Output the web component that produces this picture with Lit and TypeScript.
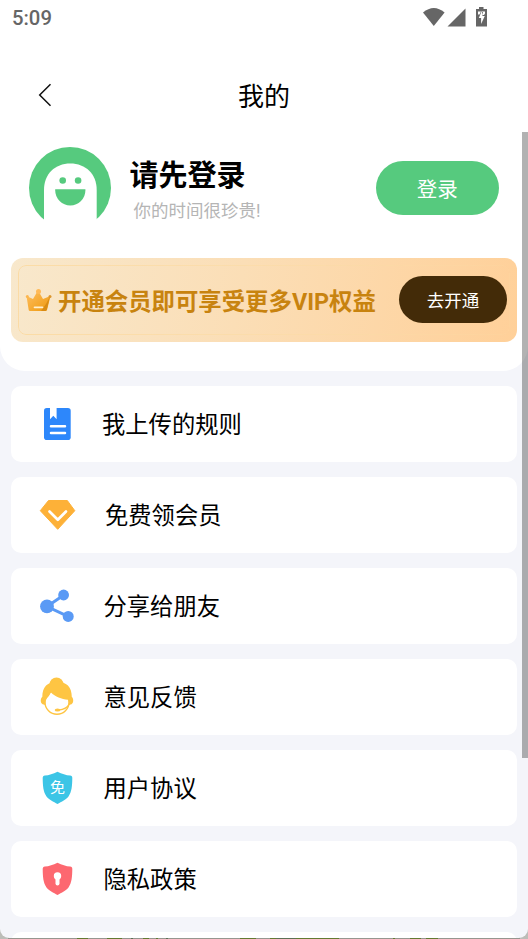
import { LitElement, html, svg, css, type SVGTemplateResult } from "lit";
import { customElement } from "lit/decorators.js";

interface MenuItem {
  label: string;
  icon: SVGTemplateResult;
  offset: number;
}

const ruleIcon = svg`
  <rect fill="#2d87fb" x="10" y="7" width="26.700" height="32" rx="2.800"/>
  <path fill="#fff" d="M16 6h6.600v12.300l-3.300-3.600-3.300 3.600z"/>
  <path stroke="#fff" stroke-width="2.500" stroke-linecap="round" d="M17 25.300h14M17 32.100h14"/>`;

const gemIcon = svg`
  <path fill="#fdb138" stroke="#fdb138" stroke-width="1" stroke-linejoin="round" d="M14.500 8.500h18.800l7.500 10.200L23.700 37.300 6.300 18.700z"/>
  <path fill="none" stroke="#fff" stroke-width="2.700" stroke-linecap="round" stroke-linejoin="round" d="M15.500 19.500l8.300 8.300 8.200-8.300"/>`;

const shareIcon = svg`
  <path stroke="#5a9af5" stroke-width="3" fill="none" d="M29.500 12.200L13 23.600l21 9.800"/>
  <circle fill="#5a9af5" cx="13" cy="23.400" r="6.900"/>
  <circle fill="#5a9af5" cx="29.600" cy="12" r="5.400"/>
  <circle fill="#5a9af5" cx="34.200" cy="33.400" r="5.500"/>`;

const supportIcon = svg`
  <circle fill="#fec543" cx="22.500" cy="10.500" r="7"/>
  <circle fill="#fff" stroke="#fec543" stroke-width="1.400" cx="23" cy="28.300" r="12"/>
  <path fill="#fec543" d="M8.300 23C8.300 13 13.500 7.800 23 7.800S37.800 13 37.800 23c1.900 1.200 2 6-.300 7.200L34.800 31c.2-2 .1-4-.8-5.300-6.500-.7-12.800-2.700-17.200-7.500-.7 3.500-3.800 5.300-5 8-.6 1.300-.6 3-.4 4.800l-2.800-.8C6.200 29 6.300 24.200 8.300 23z"/>
  <path fill="none" stroke="#fec543" stroke-width="1.400" d="M35.500 29.500c-2 4.300-5.500 6.200-11 6.600"/>
  <ellipse fill="#fec543" cx="23.500" cy="36.100" rx="2.800" ry="1.500"/>`;

const shieldPath =
  "M23.500 6.700c4.500 2.200 8.500 3.400 12.600 3.900 1.500.200 2.300 1.100 2.200 2.500-.1 8-.5 13.500-3.800 18.500-1.800 2.800-7.300 5.500-11 7.400-3.700-1.900-9.200-4.600-11-7.400C9.200 26.600 8.800 21.100 8.700 13.100c0-1.400.7-2.300 2.200-2.500 4.100-.5 8.100-1.700 12.600-3.900z";

const agreementIcon = svg`
  <path fill="#3cc5e6" d=${shieldPath}/>
  <text class="glyph" x="23.500" y="28.400" text-anchor="middle">免</text>`;

const privacyIcon = svg`
  <path fill="#fd6870" d=${shieldPath}/>
  <circle fill="#fff" cx="23.500" cy="20" r="3.700"/>
  <path stroke="#fff" stroke-width="4" stroke-linecap="round" d="M23.500 21v6.500"/>`;

const items: MenuItem[] = [
  { label: "我上传的规则", icon: ruleIcon, offset: -2 },
  { label: "免费领会员", icon: gemIcon, offset: 1 },
  { label: "分享给朋友", icon: shareIcon, offset: -0.5 },
  { label: "意见反馈", icon: supportIcon, offset: -0.5 },
  { label: "用户协议", icon: agreementIcon, offset: -0.5 },
  { label: "隐私政策", icon: privacyIcon, offset: -0.5 },
];

@customElement("app-root")
export class AppRoot extends LitElement {
  static styles = css`
    :host {
      display: block;
      position: relative;
      height: 939px;
      overflow: hidden;
      background: linear-gradient(90deg, #bcbdb8 0 8px, #96968f 8px 520px, #bcbdb8 520px);
      font-family: Roboto, "Noto Sans CJK SC", sans-serif;
      color: #000;
    }
    * { box-sizing: border-box; }
    svg { display: block; flex: none; }
    .desktop {
      position: absolute;
      left: 0;
      right: 0;
      bottom: 0;
      height: 1px;
      background: linear-gradient(90deg, transparent 77px, #637b32 77px 88px, transparent 88px 107px, #637b32 107px 122px, transparent 122px 131px, #5d7055 131px 133px, transparent 133px 143px, #637b32 143px 149px, transparent 149px 156px, #637b32 156px 158px, transparent 158px 166px, #5d7055 166px 168px, transparent 168px 240px, #637b32 240px 256px, transparent 256px 270px, #637b32 270px 276px, #5d7055 276px 296px, #637b32 296px 339px, transparent 339px 393px, #637b32 393px 395px, transparent 395px 410px, #637b32 410px 421px, transparent 421px 426px, #637b32 426px 438px, transparent 438px);
    }
    .screen {
      position: relative;
      height: 938px;
      overflow: hidden;
      border-radius: 0 0 9px 9px;
      background: #f4f5fa;
    }
    .top {
      height: 371px;
      background: #fff;
      border-radius: 0 0 25px 25px;
    }
    .status {
      display: flex;
      justify-content: space-between;
      height: 36px;
      padding: 0 40px 0 12px;
      color: #666;
      font-size: 20.3px;
      font-weight: 500;
      line-height: 37px;
    }
    .nav {
      display: grid;
      grid-template-columns: 60px 1fr 60px;
      align-items: center;
      height: 120px;
    }
    .nav svg { margin: -2px 0 0 37px; }
    .title {
      text-align: center;
      font-size: 26px;
      font-weight: 400;
      line-height: 40px;
      margin: 0;
      padding-top: 2px;
    }
    .profile {
      display: flex;
      align-items: center;
      height: 82px;
      margin-top: -9px;
      padding: 0 29px;
    }
    .who { flex: 1; padding: 8px 0 0 18.5px; }
    .name {
      font-size: 29px;
      line-height: 38px;
      font-weight: 700;
      margin: 0;
    }
    .hint {
      margin: 0 0 0 4px;
      font-size: 17.5px;
      line-height: 32px;
      color: #b5b5b5;
      white-space: nowrap;
    }
    button {
      border: 0;
      padding: 0;
      font-family: inherit;
      color: #fff;
    }
    .login {
      width: 123.5px;
      height: 54px;
      border-radius: 28px;
      background: #56ca7e;
      font-size: 20.5px;
    }
    .vip {
      display: flex;
      align-items: center;
      position: relative;
      height: 84px;
      margin: 29px 11px 0;
      padding: 0 10px 0 14px;
      border-radius: 12px;
      background: linear-gradient(100deg, #f8e8cc, #fbdeb6 45%, #ffd099);
    }
    .vip::before {
      content: "";
      position: absolute;
      inset: 7px;
      border: 1px solid #fbdba5;
      border-radius: 8px;
      -webkit-mask-image: linear-gradient(90deg, #000, rgba(0, 0, 0, 0.2));
    }
    .offer {
      flex: 1;
      padding-left: 6px;
      font-size: 23.4px;
      font-weight: 700;
      color: #c8830f;
      white-space: nowrap;
    }
    .open {
      position: relative;
      width: 108px;
      height: 47px;
      margin: -2px 0 0;
      border-radius: 24px;
      background: #432b08;
      font-size: 17.5px;
    }
    .menu {
      display: flex;
      flex-direction: column;
      gap: 15px;
      padding: 15px 11px 0;
    }
    .card {
      display: flex;
      flex: none;
      align-items: center;
      height: 76px;
      padding-left: 23px;
      border-radius: 10px;
      background: #fff;
    }
    .label {
      padding-top: 2px;
      font-size: 23.3px;
      line-height: 36px;
      white-space: nowrap;
    }
    .glyph { font-size: 15px; fill: #fff; }
    .scrollbar {
      position: absolute;
      top: 132px;
      right: 0;
      width: 6px;
      height: 626px;
      background: rgba(0, 0, 0, 0.3);
    }
  `;

  render() {
    return html`
      <div class="desktop"></div>
      <main class="screen">
        <section class="top">
          <div class="status">
            <span>5:09</span>
            <svg width="66" height="36" viewBox="422 0 66 36" fill="#666">
              <path d="M423 12.500Q433.800 3.500 444.600 12.500L433.800 26z" />
              <path d="M465.500 8.500V26.500H447.500z" />
              <path d="M479 7h4.500v2h3.500v17.500h-11V9h3z" />
              <path fill="#fff" d="M478 11.500h3l-1.500 3H478zM482 11.500h3v2l-1 1.500h-1.500zM481.800 11l-3 7h2.300v6l3.700-8h-2.400l.8-5z" />
            </svg>
          </div>
          <header class="nav">
            <svg width="16" height="24" viewBox="0 0 16 24" fill="none" stroke="#111" stroke-width="1.500">
              <path d="M13.500 1.200L2.700 12l10.800 10.800" />
            </svg>
            <h1 class="title">我的</h1>
          </header>
          <div class="profile">
            <svg width="82" height="82" viewBox="0 0 82 82">
              <circle cx="41" cy="41" r="41" fill="#56ca7e" />
              <path fill="#fff" d="M15 82V43C15 27 26 16.500 41.300 16.500S67.700 27 67.700 43v39z" />
              <circle cx="33.700" cy="33.500" r="3.300" fill="#56ca7e" />
              <circle cx="49.100" cy="33.500" r="3.300" fill="#56ca7e" />
              <path d="M26.200 42.300h30.200v1a15.100 15.100 0 0 1-30.200 0z" fill="#56ca7e" />
            </svg>
            <div class="who">
              <h2 class="name">请先登录</h2>
              <p class="hint">你的时间很珍贵!</p>
            </div>
            <button class="login">登录</button>
          </div>
          <div class="vip">
            <svg width="27" height="24" viewBox="0 0 27 24">
              <defs>
                <linearGradient id="gold" x1="0" y1="0" x2="1" y2="1">
                  <stop offset="0" stop-color="#ffc064" />
                  <stop offset="1" stop-color="#ee980b" />
                </linearGradient>
              </defs>
              <path fill="url(#gold)" d="M1.500 8l6.500 3 5-8.500 5 8.500 7.500-3-3.500 14q-.5 1-1.700 1H5q-1 0-1.300-1z" />
              <path fill="#d98b13" d="M25 8.500l-3.300 13.500q-.5 1-1.700 1h-4l5-7z" />
              <circle cx="13.500" cy="3.500" r="2.500" fill="#ffba58" />
              <circle cx="2.300" cy="8.500" r="1.500" fill="#fcb64e" />
              <circle cx="25" cy="8.500" r="1.500" fill="#dc962d" />
              <path d="M9.500 19.300h8" stroke="#fff0d0" stroke-width="1.700" stroke-linecap="round" />
            </svg>
            <span class="offer">开通会员即可享受更多VIP权益</span>
            <button class="open">去开通</button>
          </div>
        </section>
        <nav class="menu">
          ${items.map(
            (item) => html`
              <div class="card">
                <svg width="46" height="46" viewBox="0 0 46 46">${item.icon}</svg>
                <span class="label" style="margin-left:${24 + item.offset}px">${item.label}</span>
              </div>
            `
          )}
          <div class="card"></div>
        </nav>
        <div class="scrollbar"></div>
      </main>
    `;
  }
}
